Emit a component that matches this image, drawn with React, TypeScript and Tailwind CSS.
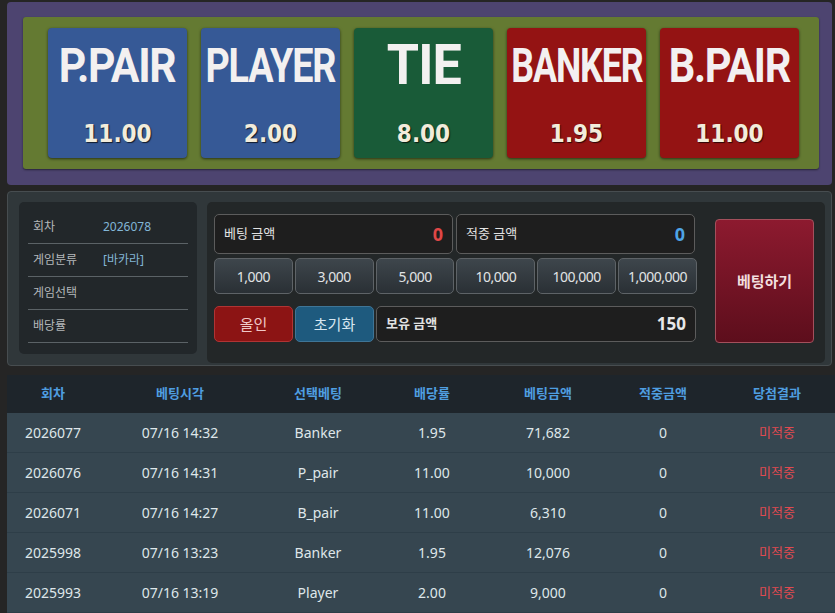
const cards = [
  { label: "P.PAIR", odds: "11.00", bg: "bg-[#365996]", fit: "scale-x-[0.87] text-[49px] leading-[49px] tracking-[-1.5px]" },
  { label: "PLAYER", odds: "2.00", bg: "bg-[#365996]", fit: "scale-x-[0.77] text-[49px] leading-[49px] tracking-[-1.5px]" },
  { label: "TIE", odds: "8.00", bg: "bg-[#195b38]", fit: "scale-x-[0.93] text-[56px] leading-[56px] tracking-[-1px]" },
  { label: "BANKER", odds: "1.95", bg: "bg-[#941313]", fit: "scale-x-[0.73] text-[49px] leading-[49px] tracking-[-1.5px]" },
  { label: "B.PAIR", odds: "11.00", bg: "bg-[#941313]", fit: "scale-x-[0.85] text-[49px] leading-[49px] tracking-[-1.5px]" },
];

const chips = ["1,000", "3,000", "5,000", "10,000", "100,000", "1,000,000"];

const history = [
  ["2026077", "07/16 14:32", "Banker", "1.95", "71,682", "0"],
  ["2026076", "07/16 14:31", "P_pair", "11.00", "10,000", "0"],
  ["2026071", "07/16 14:27", "B_pair", "11.00", "6,310", "0"],
  ["2025998", "07/16 13:23", "Banker", "1.95", "12,076", "0"],
  ["2025993", "07/16 13:19", "Player", "2.00", "9,000", "0"],
];

const cols = "grid grid-cols-[92px_162px_114px_114px_118px_112px_1fr]";
const kr = "font-['Noto_Sans','Noto_Sans_CJK_KR',sans-serif]";

const App = () => {
  return (
    <div className={`h-[613px] w-[835px] overflow-hidden bg-[#252525] pt-[2px] ${kr}`}>
      {/* odds board */}
      <div className="ml-[7px] mr-[3px] h-[183px] rounded-[4px] bg-[#4d4470] pl-[16px] pr-[13px] pt-[15px]">
        <div className="flex h-[152px] gap-[14px] rounded-[3px] bg-[#647a32] pl-[25px] pt-[11px] shadow-[0_1px_2px_rgba(0,0,0,0.5)]">
          {cards.map((c) => (
            <div
              className={`flex h-[130px] w-[139px] flex-col items-center rounded-[4px] ${c.bg} shadow-[0_1px_3px_rgba(0,0,0,0.6)]`}
              key={c.label}
            >
              <div className="flex h-[74px] items-center justify-center">
                <span className={`inline-block font-['Roboto',sans-serif] font-bold text-[#f3f0f0] ${c.fit}`}>
                  {c.label}
                </span>
              </div>
              <div className="mt-[20px] font-['DejaVu_Sans_Condensed','DejaVu_Sans',sans-serif] text-[24px] font-bold leading-[24px] text-[#f2ecdb] [text-shadow:1px_1px_1px_rgba(0,0,0,0.7)]">
                {c.odds}
              </div>
            </div>
          ))}
        </div>
      </div>

      {/* bet panel */}
      <div className="ml-[7px] mr-[3px] mt-[6px] flex h-[175px] gap-[10px] rounded-[4px] border border-[#474d50] bg-[#30373a] pl-[11px] pr-[6px] pt-[10px]">
        <div className="h-[152px] w-[178px] rounded-[5px] bg-[#22272a] px-[9px] pt-[9px]">
          {[
            ["회차", "2026078"],
            ["게임분류", "[바카라]"],
            ["게임선택", ""],
            ["배당률", ""],
          ].map(([k, v]) => (
            <div className="flex h-[33px] items-center border-b border-[#5b6266] pl-[5px] text-[12px]" key={k}>
              <span className="w-[70px] text-[#b4b8ba]">{k}</span>
              <span className="text-[#82b6d6]">{v}</span>
            </div>
          ))}
        </div>

        <div className="flex h-[161px] flex-1 rounded-[5px] bg-[#232728] pl-[7px] pt-[12px]">
          <div className="w-[483px]">
            <div className="flex gap-[3px]">
              <div className="flex h-[40px] w-[239px] items-center justify-between rounded-[5px] border border-[#5c5c5c] bg-[#1e1e1e] px-[9px]">
                <span className="text-[13px] text-[#e2e2e2]">베팅 금액</span>
                <span className="text-[18px] font-bold text-[#e04747]">0</span>
              </div>
              <div className="flex h-[40px] w-[239px] items-center justify-between rounded-[5px] border border-[#5c5c5c] bg-[#1e1e1e] px-[9px]">
                <span className="text-[13px] text-[#e2e2e2]">적중 금액</span>
                <span className="text-[18px] font-bold text-[#4ea4e6]">0</span>
              </div>
            </div>
            <div className="mt-[4px] flex gap-[2px]">
              {chips.map((c) => (
                <div
                  className="flex h-[36px] w-[79px] items-center justify-center rounded-[5px] border border-[#5e6367] bg-gradient-to-b from-[#3e464c] to-[#2a3035] text-[14px] tracking-[-0.5px] text-[#e0e3e5]"
                  key={c}
                >
                  {c}
                </div>
              ))}
            </div>
            <div className="mt-[12px] flex gap-[2px]">
              <div className="flex h-[36px] w-[79px] items-center justify-center rounded-[5px] border border-[#b03434] bg-[#8c1414] text-[15px] text-[#f0c8c8]">
                올인
              </div>
              <div className="flex h-[36px] w-[79px] items-center justify-center rounded-[5px] border border-[#3f7596] bg-[#1e5a7e] text-[15px] text-[#d6e6f0]">
                초기화
              </div>
              <div className="flex h-[36px] w-[320px] items-center justify-between rounded-[5px] border border-[#5c5c5c] bg-[#1e1e1e] px-[9px]">
                <span className="text-[13px] font-bold text-[#e2e2e2]">보유 금액</span>
                <span className="text-[17px] font-bold text-[#e8e8e8]">150</span>
              </div>
            </div>
          </div>
          <div className="ml-[18px] mt-[5px] flex h-[124px] w-[99px] items-center justify-center rounded-[4px] border border-[#a3505c] bg-gradient-to-b from-[#8d1a2f] to-[#5d0e1c] text-[15px] font-bold text-[#f2dede]">
            베팅하기
          </div>
        </div>
      </div>

      {/* history table */}
      <div className="ml-[7px] mt-[9px]">
        <div className={`${cols} h-[38px] items-center bg-[#1e252b] text-center text-[13px] font-bold text-[#4f9ee0]`}>
          <div>회차</div>
          <div>베팅시각</div>
          <div>선택베팅</div>
          <div>배당률</div>
          <div>베팅금액</div>
          <div>적중금액</div>
          <div>당첨결과</div>
        </div>
        {history.map((r) => (
          <div
            className={`${cols} h-[40px] items-center border-b border-[#2e3e48] bg-[#364650] text-center text-[14px] text-[#dfe6ea]`}
            key={r[0]}
          >
            {r.map((cell, i) => (
              <div key={i}>{cell}</div>
            ))}
            <div className="text-[13px] text-[#e04a50]">미적중</div>
          </div>
        ))}
        <div className="h-[40px] bg-[#364650]" />
      </div>
    </div>
  );
};

export default App;
